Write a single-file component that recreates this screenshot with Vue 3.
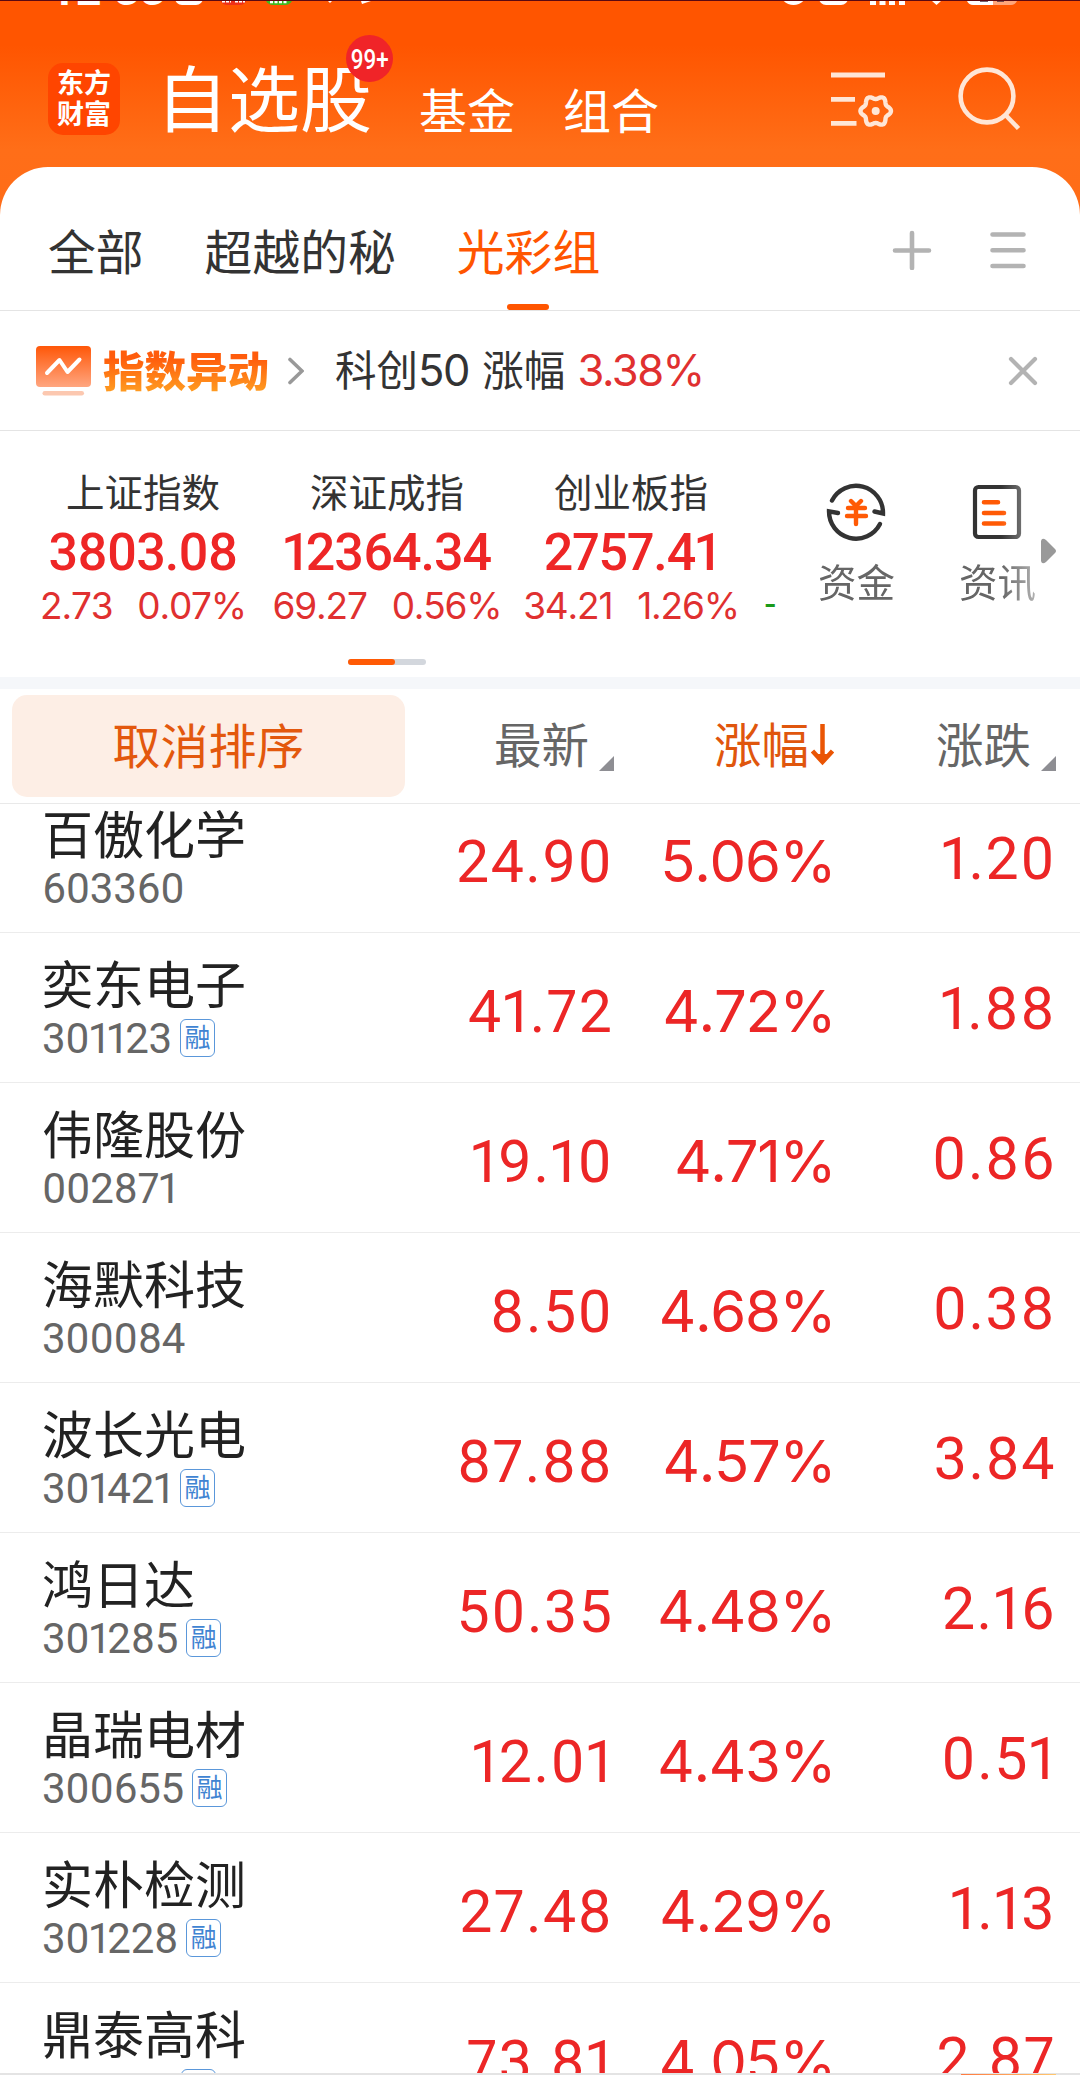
<template>
  <div class="page">
    <div class="status-bar">
      <span class="clock">12<i>:</i>33</span>
      <svg class="status-icons" width="1080" height="5" viewBox="0 0 1080 5">
        <rect x="175" y="-20" width="28" height="25" rx="7" fill="#fff" />
        <rect x="220" y="-20" width="27" height="25" rx="7" fill="#f03018" />
        <path d="M222 1.5h9M235 1.5h10" stroke="#fff" stroke-width="2" stroke-dasharray="3 1" />
        <rect x="265" y="-20" width="28" height="25" rx="8" fill="#3cb91e" />
        <path d="M270 2h18" stroke="#fff" stroke-width="2.500" stroke-dasharray="3 1.500" />
        <path d="M328 1h4l-2 2zM361 1h10l-9 3z" fill="#fff" />
        <circle cx="793.500" cy="-9" r="14" fill="#fff" />
        <rect x="819" y="-20" width="29" height="25" rx="7" fill="#fff" />
        <path d="M870 1h6v4h-6zM879.500 1h6v4h-6zM889 1h6v4h-6zM899 1h6v4h-6z" fill="#fff" />
        <path d="M932 1h9l-4.500 4z" fill="#fff" />
        <path d="M967 1h26v4h-20q-4 0-6-4z" fill="#fff" />
        <path d="M993 1h24q-2 4-6 4h-18z" fill="#ffa57a" />
        <path d="M980 1h8M997 1h7" stroke="#4a3040" stroke-width="1.500" />
      </svg>
    </div>

    <header class="header">
      <div class="logo">
        <span>东方</span>
        <span>财富</span>
      </div>
      <nav class="main-nav">
        <a class="nav-item current">自选股<span class="badge"><i>99+</i></span></a>
        <a class="nav-item">基金</a>
        <a class="nav-item">组合</a>
      </nav>
      <div class="header-actions">
        <svg width="66" height="60" viewBox="0 0 66 60" fill="none" stroke="#ffe6d6" stroke-width="4.800">
          <path d="M1 5h54M1 29.300h24M1 53.300h25.500" />
          <path :d="gearPath" stroke-width="4.400" stroke-linejoin="round" />
          <circle cx="45.700" cy="41" r="4" fill="#ffe6d6" stroke="none" />
        </svg>
        <svg width="66" height="66" viewBox="0 0 66 66" fill="none" stroke="#ffe6d6" stroke-width="4.600">
          <circle cx="31" cy="31" r="26.400" />
          <path d="M49.500 50 62.500 63.500" />
        </svg>
      </div>
    </header>

    <main class="sheet">
      <div class="group-tabs">
        <a
          v-for="group in groups"
          :key="group"
          class="group-tab"
          :class="{ active: group === activeGroup }"
          @click="activeGroup = group"
        >
          {{ group }}
        </a>
        <div class="group-actions">
          <svg width="40" height="40" viewBox="0 0 40 40" stroke="#b3b3b3" stroke-width="4.600" stroke-linecap="round">
            <path d="M3 20.500h34M20 3v35" />
          </svg>
          <svg width="36" height="40" viewBox="0 0 36 40" stroke="#b3b3b3" stroke-width="4.600" stroke-linecap="round">
            <path d="M2.500 4.500h31M2.500 20.300h31M2.500 36h31" />
          </svg>
        </div>
      </div>

      <div class="notice">
        <svg class="notice-icon" width="55" height="50" viewBox="0 0 55 50">
          <defs>
            <linearGradient id="screen" x1="0" y1="0" x2="0" y2="1">
              <stop offset="0" stop-color="#ff5708" />
              <stop offset="1" stop-color="#ffa680" />
            </linearGradient>
          </defs>
          <rect width="55" height="41" rx="4" fill="url(#screen)" />
          <path d="M11 27 23.500 14l8 12L43.500 13.500" fill="none" stroke="#fff" stroke-width="4" stroke-linecap="round" stroke-linejoin="round" />
          <rect x="6.500" y="45" width="41.500" height="4.500" rx="2.200" fill="#fcc8b0" />
        </svg>
        <strong class="notice-title">指数异动</strong>
        <svg class="chevron" width="16" height="28" viewBox="0 0 16 28" fill="none" stroke="#999" stroke-width="3.600" stroke-linecap="round">
          <path d="M2 2.500 14 14 2 25.500" />
        </svg>
        <span class="notice-text">科创<i>50</i> 涨幅 <em>3.38%</em></span>
        <svg class="close" width="30" height="30" viewBox="0 0 30 30" stroke="#b3b3b3" stroke-width="4.200" stroke-linecap="round">
          <path d="M3 3 27 27M27 3 3 27" />
        </svg>
      </div>

      <div class="market">
        <div class="indices">
          <div v-for="item in indices" :key="item.name" class="index">
            <div class="index-name">{{ item.name }}</div>
            <div class="index-value">{{ item.value }}</div>
            <div class="index-change">
              <span>{{ item.change }}</span>
              <span>{{ item.percent }}</span>
            </div>
          </div>
          <div class="index-peek">-</div>
        </div>
        <div class="shortcuts">
          <div class="shortcut">
            <svg width="62" height="62" viewBox="0 0 62 62" fill="none" stroke="#333" stroke-width="4.400" stroke-linecap="round">
              <path d="M6 19.500A27 27 0 0 1 57 32.500L48.500 30.500" />
              <path d="M54 43A27 27 0 0 1 3 30.300L12 32" />
              <g stroke="#ff5a05">
                <path d="M25 20l5 5 5-5M22 27h17M21 35h19M30 26v17" />
              </g>
            </svg>
            <span>资金</span>
          </div>
          <div class="shortcut">
            <svg width="62" height="62" viewBox="0 0 62 62" fill="none" stroke="#333" stroke-width="4.200" stroke-linecap="round">
              <rect x="8" y="6" width="44" height="50" rx="3.500" />
              <path d="M17 21.300h14M17 32h20M17 42.500h20" stroke="#ff5a05" stroke-width="4.600" />
            </svg>
            <span>资讯</span>
          </div>
        </div>
        <svg class="more" width="16" height="26" viewBox="0 0 16 26">
          <path d="M0 3Q1-1 5 2L14 11q2 2 0 4L5 24Q1 27 0 23z" fill="#999" />
        </svg>
        <div class="pager"><span></span></div>
      </div>

      <div class="table-head">
        <button class="reset-sort">取消排序</button>
        <div class="col-head price">最新<i class="corner"></i></div>
        <div class="col-head percent sorted">
          涨幅
          <svg width="23" height="43" viewBox="0 0 23 43">
            <path d="M11.500 0v37M1.500 27l10 11 10-11" fill="none" stroke="#ea5504" stroke-width="4.500" />
            <path d="M4 30h15l-7.500 9z" fill="#ea5504" />
          </svg>
        </div>
        <div class="col-head change">涨跌<i class="corner"></i></div>
      </div>

      <div class="stock-list">
        <div v-for="stock in stocks" :key="stock.code" class="stock">
          <div class="stock-info">
            <div class="stock-name">{{ stock.name }}</div>
            <div class="stock-code">
              {{ stock.code }}<span v-if="stock.margin" class="margin-tag">融</span>
            </div>
          </div>
          <div class="cell price">{{ stock.price }}</div>
          <div class="cell percent">{{ stock.percent }}</div>
          <div class="cell change">{{ stock.change }}</div>
        </div>
      </div>
    </main>

    <div class="bottom-edge"><span></span></div>
  </div>
</template>

<script setup>
import { ref } from 'vue'

const groups = ['全部', '超越的秘', '光彩组']
const activeGroup = ref('光彩组')

const indices = [
  { name: '上证指数', value: '3803.08', change: '2.73', percent: '0.07%' },
  { name: '深证成指', value: '12364.34', change: '69.27', percent: '0.56%' },
  { name: '创业板指', value: '2757.41', change: '34.21', percent: '1.26%' }
]

const stocks = [
  { name: '百傲化学', code: '603360', margin: false, price: '24.90', percent: '5.06%', change: '1.20' },
  { name: '奕东电子', code: '301123', margin: true, price: '41.72', percent: '4.72%', change: '1.88' },
  { name: '伟隆股份', code: '002871', margin: false, price: '19.10', percent: '4.71%', change: '0.86' },
  { name: '海默科技', code: '300084', margin: false, price: '8.50', percent: '4.68%', change: '0.38' },
  { name: '波长光电', code: '301421', margin: true, price: '87.88', percent: '4.57%', change: '3.84' },
  { name: '鸿日达', code: '301285', margin: true, price: '50.35', percent: '4.48%', change: '2.16' },
  { name: '晶瑞电材', code: '300655', margin: true, price: '12.01', percent: '4.43%', change: '0.51' },
  { name: '实朴检测', code: '301228', margin: true, price: '27.48', percent: '4.29%', change: '1.13' },
  { name: '鼎泰高科', code: '301377', margin: true, price: '73.81', percent: '4.05%', change: '2.87' }
]

// six-lobed outline of the settings gear
const gearPath = Array.from({ length: 73 }, (_, i) => {
  const a = (i * 5 * Math.PI) / 180
  const r = 13.6 + 1.7 * Math.cos(6 * a)
  const x = (45.7 + r * Math.cos(a)).toFixed(2)
  const y = (41 + r * Math.sin(a)).toFixed(2)
  return `${i ? 'L' : 'M'}${x} ${y}`
}).join('') + 'Z'
</script>

<style>
body {
  margin: 0;
  background: #fff;
}
</style>

<style scoped>
.page {
  position: relative;
  width: 1080px;
  height: 2075px;
  overflow: hidden;
  background: linear-gradient(#ff5500 0, #ff5500 45px, #ff6e18 150px, #ff6c18 220px);
  font-family: Roboto, "Noto Sans CJK SC", sans-serif;
  color: #333;
}

.page * {
  box-sizing: border-box;
}

i,
em {
  font-style: normal;
}

svg {
  display: block;
  flex: none;
}

.status-bar {
  position: relative;
  height: 5px;
  overflow: hidden;
  border-top: 1px solid #5a0812;
}

.clock {
  position: absolute;
  left: 50px;
  bottom: -10px;
  font-size: 45px;
  line-height: 50px;
  font-weight: 700;
  color: #fff;
}

.clock i {
  position: relative;
  top: -8px;
}

.status-icons {
  position: absolute;
  top: -1px;
  left: 0;
}

.header {
  display: flex;
  height: 162px;
  padding-left: 48px;
}

.logo {
  display: flex;
  flex-direction: column;
  align-items: center;
  width: 72px;
  height: 72px;
  margin-top: 58px;
  padding-top: 6px;
  border-radius: 15px;
  background: #ff4500;
  color: #fff;
  font-size: 27px;
  font-weight: 700;
  line-height: 31px;
}

.main-nav {
  display: flex;
  margin-left: 36px;
}

.nav-item {
  position: relative;
  margin-right: 48px;
  padding-top: 80px;
  font-size: 48px;
  line-height: 56px;
  color: #fff;
}

.nav-item.current {
  margin-right: 47px;
  padding-top: 57px;
  font-size: 72px;
  line-height: 80px;
}

.badge {
  display: flex;
  align-items: center;
  justify-content: center;
  position: absolute;
  top: 30px;
  left: 190px;
  width: 47px;
  height: 47px;
  border-radius: 50%;
  background: #f02428;
  font-size: 28px;
  font-weight: 500;
  line-height: 47px;
}

.badge i {
  transform: translateY(1px) scaleX(0.8);
}

.header-actions {
  display: flex;
  gap: 60px;
  margin-left: auto;
  padding: 60px 58px 0 0;
}

.header-actions svg:first-child {
  margin-top: 5px;
}

.sheet {
  background: #fff;
  border-radius: 48px 48px 0 0;
  overflow: hidden;
}

.group-tabs {
  display: flex;
  height: 144px;
  padding-left: 48px;
  border-bottom: 1px solid #e4e4e4;
}

.group-tab {
  position: relative;
  margin-right: 61px;
  padding-top: 59px;
  font-size: 47.800px;
  line-height: 56px;
}

.group-tab.active {
  color: #ff5500;
}

.group-tab.active::after {
  content: "";
  position: absolute;
  left: 50%;
  bottom: 0;
  width: 42px;
  height: 6px;
  margin-left: -22px;
  border-radius: 3px;
  background: #ff5500;
}

.group-actions {
  display: flex;
  gap: 58px;
  margin-left: auto;
  padding: 63px 54px 0 0;
}

.notice {
  display: flex;
  align-items: center;
  height: 120px;
  padding: 1px 42px 0 36px;
  border-bottom: 1px solid #e4e4e4;
}

.notice-title {
  margin: 3px 0 0 12px;
  font-size: 41.500px;
  font-weight: 900;
  line-height: 60px;
  background: linear-gradient(#ff5c0c 25%, #ff9a20 80%);
  -webkit-background-clip: text;
  background-clip: text;
  color: transparent;
}

.chevron {
  margin-left: 19px;
}

.notice-text {
  margin: 0 0 0 31px;
  font-size: 41.500px;
  line-height: 60px;
  white-space: pre;
}

.notice-text i,
.notice-text em {
  font-family: Inter, sans-serif;
  font-size: 43.500px;
  letter-spacing: -1.500px;
}

.notice-text i {
  margin-right: 3px;
}

.notice-text em {
  margin-left: 2px;
  color: #e03030;
}

.close {
  margin-left: auto;
}

.market {
  position: relative;
  display: flex;
  height: 258px;
  border-bottom: 12px solid #f5f7fa;
}

.indices {
  display: flex;
  width: 786px;
  padding-left: 21px;
}

.index {
  width: 244px;
  padding-top: 37px;
  text-align: center;
}

.index-name {
  font-size: 38.500px;
  line-height: 52px;
}

.index-value {
  margin-top: 4px;
  font-size: 52px;
  font-weight: 500;
  line-height: 58px;
  letter-spacing: -1px;
  font-variant-numeric: proportional-nums;
  color: #ee2626;
}

.index-change {
  display: flex;
  justify-content: center;
  gap: 25px;
  margin-top: 4px;
  font-family: Inter, sans-serif;
  font-size: 37px;
  font-kerning: none;
  line-height: 40px;
  letter-spacing: -1.200px;
  color: #e03030;
}

.index-peek {
  padding: 153px 0 0 12px;
  font-size: 38px;
  line-height: 40px;
  color: #1a9a1a;
}

.shortcuts {
  display: flex;
  width: 250px;
  overflow: hidden;
  -webkit-mask-image: linear-gradient(90deg, #000 86%, rgba(0, 0, 0, 0.5));
  mask-image: linear-gradient(90deg, #000 86%, rgba(0, 0, 0, 0.5));
}

.shortcut {
  display: flex;
  flex: none;
  flex-direction: column;
  align-items: center;
  width: 141px;
  padding-top: 50px;
  font-size: 38.500px;
  line-height: 50px;
  color: #666;
}

.shortcut span {
  margin-top: 16px;
}

.more {
  position: absolute;
  left: 1041px;
  top: 107px;
}

.pager {
  position: absolute;
  left: 348px;
  top: 228px;
  width: 78px;
  height: 6px;
  border-radius: 3px;
  background: #d3d7dd;
}

.pager span {
  display: block;
  width: 47px;
  height: 6px;
  border-radius: 3px;
  background: #ff5a05;
}

.table-head {
  display: flex;
  height: 115px;
  padding: 6px 24px 6px 12px;
  border-bottom: 1px solid #e9e9e9;
}

.reset-sort {
  width: 393px;
  height: 102px;
  padding: 0 0 7px;
  border: 0;
  border-radius: 15px;
  background: #fdeee5;
  color: #e3580d;
  font: inherit;
  font-size: 48px;
}

.col-head {
  display: flex;
  justify-content: flex-end;
  align-items: center;
  padding-bottom: 7px;
  font-size: 47.500px;
  color: #666;
}

.col-head.price {
  width: 209px;
}

.col-head.percent {
  width: 220px;
}

.col-head.change {
  width: 222px;
}

.col-head.sorted {
  color: #e0560d;
}

.sorted svg {
  margin: 5px 0 0 2px;
}

.corner {
  width: 15px;
  height: 15px;
  margin: 42px 0 0 10px;
  background: #8e8e93;
  clip-path: polygon(100% 0, 100% 100%, 0 100%);
}

/* the list is scrolled a little, so the first row slides under the head */
.stock-list {
  overflow: hidden;
}

.stock:first-child {
  margin-top: -21px;
}

.stock {
  display: flex;
  height: 150px;
  padding: 0 24px 0 42px;
  border-bottom: 1px solid #ececec;
}

.stock-info {
  width: 363px;
  padding-top: 24px;
}

.stock-name {
  font-size: 51px;
  line-height: 60px;
  color: #222;
}

.stock-code {
  display: flex;
  align-items: center;
  height: 42px;
  font-size: 42px;
  letter-spacing: -0.300px;
  font-variant-numeric: proportional-nums;
  color: #666;
}

.margin-tag {
  width: 35px;
  height: 38px;
  margin-left: 8px;
  border: 1.500px solid #5a97da;
  border-radius: 6px;
  color: #3f84d2;
  font-size: 26px;
  line-height: 36px;
  text-align: center;
}

.cell {
  padding-top: 44px;
  font-size: 59px;
  line-height: 70px;
  letter-spacing: 1.500px;
  text-align: right;
  font-variant-numeric: proportional-nums;
  font-kerning: none;
  color: #ec2626;
}

.cell.price {
  width: 209px;
}

.cell.percent {
  width: 222px;
  padding-top: 43px;
  font-family: Inter, sans-serif;
  font-size: 58px;
  letter-spacing: -1.300px;
}

.cell.change {
  width: 221px;
  padding-top: 41px;
}

.bottom-edge {
  position: absolute;
  left: 0;
  right: 0;
  bottom: 0;
  height: 2px;
  background: #e4e4e4;
}

.bottom-edge span {
  display: block;
  width: 95px;
  height: 1px;
  margin-left: 961px;
  transform: translateY(1px);
  background: linear-gradient(90deg, #ff7a40, #ffc870);
}
</style>
